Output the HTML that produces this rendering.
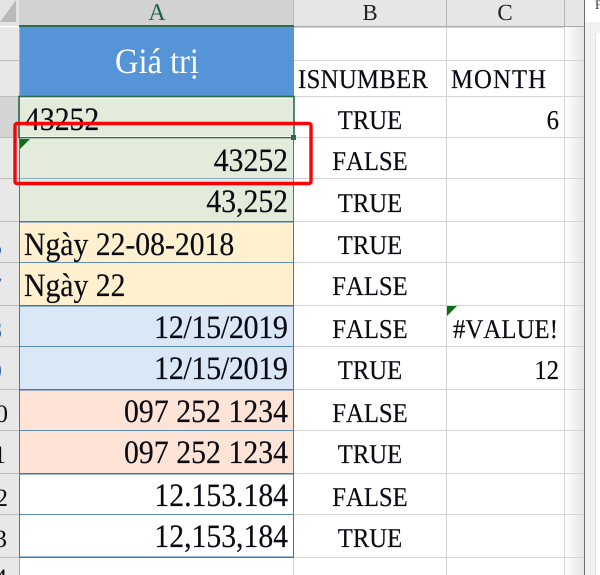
<!DOCTYPE html>
<html><head><meta charset="utf-8"><style>
html,body{margin:0;padding:0;background:#fff;width:600px;height:575px;overflow:hidden}
svg{display:block}
text{font-family:"Liberation Serif",serif;fill:#0b0b14;font-kerning:none;text-rendering:geometricPrecision}
.a{font-size:29.7px}
.a text,.b text{stroke:#0b0b14;stroke-width:.18px}
.b{font-size:24.7px}
</style></head><body>
<svg width="600" height="575" viewBox="0 0 600 575" xmlns="http://www.w3.org/2000/svg">
<defs><linearGradient id="g" x1="0" x2="1" y1="0" y2="0"><stop offset="0" stop-color="#fff"/><stop offset="1" stop-color="#e4e4e4"/></linearGradient></defs>
<rect width="600" height="575" fill="#fff"/>
<!-- column headers -->
<rect x="0" y="0" width="19" height="26" fill="#e4e4e4"/>
<polygon points="16,0 16,22 0,22" fill="#b9b9b9"/>
<rect x="19" y="0" width="275" height="26" fill="#d2d2d2"/>
<rect x="294" y="0" width="290" height="26" fill="#e6e6e6"/>
<rect x="293" y="0" width="1" height="26" fill="#bdbdbd"/>
<rect x="446" y="0" width="1" height="26" fill="#b5b5b5"/>
<rect x="564" y="0" width="1" height="26" fill="#b5b5b5"/>
<rect x="294" y="26" width="290" height="1.5" fill="#a8a8a8"/>
<rect x="19" y="25" width="275" height="2" fill="#2c7050"/>
<!-- row headers -->
<rect x="0" y="27" width="19" height="548" fill="#e8e8e8"/>
<rect x="0" y="97" width="19" height="40" fill="#d4d4d4"/>
<g fill="#bcbcbc">
<rect x="0" y="60" width="19" height="1"/><rect x="0" y="96" width="19" height="1"/><rect x="0" y="137" width="19" height="1"/><rect x="0" y="178" width="19" height="1"/><rect x="0" y="221" width="19" height="1"/><rect x="0" y="262" width="19" height="1"/><rect x="0" y="305" width="19" height="1"/><rect x="0" y="346" width="19" height="1"/><rect x="0" y="389" width="19" height="1"/><rect x="0" y="430" width="19" height="1"/><rect x="0" y="473" width="19" height="1"/><rect x="0" y="514" width="19" height="1"/><rect x="0" y="557" width="19" height="1"/>
<rect x="19" y="27" width="1" height="548" fill="#b0b0b0"/>
</g>
<!-- gridlines -->
<g fill="#d4d4d4">
<rect x="294" y="60" width="290" height="1"/><rect x="294" y="96" width="290" height="1"/><rect x="294" y="137" width="290" height="1"/><rect x="294" y="178" width="290" height="1"/><rect x="294" y="221" width="290" height="1"/><rect x="294" y="262" width="290" height="1"/><rect x="294" y="305" width="290" height="1"/><rect x="294" y="346" width="290" height="1"/><rect x="294" y="389" width="290" height="1"/><rect x="294" y="430" width="290" height="1"/><rect x="294" y="473" width="290" height="1"/><rect x="294" y="514" width="290" height="1"/><rect x="294" y="557" width="290" height="1"/>
<rect x="446" y="27" width="1" height="548"/><rect x="564" y="27" width="1" height="548"/><rect x="293" y="557" width="1" height="18"/>
</g>
<rect x="565" y="27" width="19" height="548" fill="url(#g)"/>
<g fill="#d4d4d4"><rect x="565" y="60" width="19" height="1"/><rect x="565" y="96" width="19" height="1"/><rect x="565" y="137" width="19" height="1"/><rect x="565" y="178" width="19" height="1"/><rect x="565" y="221" width="19" height="1"/><rect x="565" y="262" width="19" height="1"/><rect x="565" y="305" width="19" height="1"/><rect x="565" y="346" width="19" height="1"/><rect x="565" y="389" width="19" height="1"/><rect x="565" y="430" width="19" height="1"/><rect x="565" y="473" width="19" height="1"/><rect x="565" y="514" width="19" height="1"/><rect x="565" y="557" width="19" height="1"/></g>
<!-- right side window -->
<rect x="584" y="0" width="1.3" height="575" fill="#6e6e6e"/>
<rect x="585" y="0" width="15" height="575" fill="#fff"/>
<rect x="585" y="22" width="10" height="553" fill="#f1f1f1"/>
<rect x="595" y="33" width="5" height="542" fill="#fff"/>
<rect x="595" y="33" width="1" height="542" fill="#e0e0e0"/>
<rect x="595" y="22" width="5" height="11" fill="#f1f1f1"/>
<text x="595" y="9" font-size="13" style="fill:#333">F</text>
<!-- column A fills -->
<rect x="20" y="27" width="274" height="70" fill="#5694d8"/>
<rect x="20" y="97" width="274" height="124" fill="#e3ecdb"/>
<rect x="20" y="221" width="274" height="84" fill="#fff1d0"/>
<rect x="20" y="305" width="274" height="84" fill="#d9e7f6"/>
<rect x="20" y="389" width="274" height="84" fill="#fde4d6"/>
<rect x="20" y="473" width="274" height="84" fill="#fff"/>
<!-- column A borders -->
<g fill="#5b8db8">
<rect x="20" y="178" width="274" height="1"/>
<rect x="20" y="262" width="274" height="1"/>
<rect x="20" y="346" width="274" height="1"/>
<rect x="20" y="430" width="274" height="1"/>
<rect x="20" y="514" width="274" height="1"/>
</g>
<g fill="#3f78ad">
<rect x="20" y="221" width="274" height="1.5"/>
<rect x="20" y="305" width="274" height="1.5"/>
<rect x="20" y="389" width="274" height="1.5"/>
<rect x="20" y="473" width="274" height="1.5"/>
<rect x="20" y="556.5" width="274" height="1.5"/>
<rect x="293" y="137" width="1" height="421"/>
<rect x="19" y="137" width="1" height="421"/>
</g>
<rect x="20" y="178" width="274" height="1" fill="#8aaec9"/>
<!-- selected cell -->
<rect x="19" y="96.5" width="275" height="41" fill="none" stroke="#2c6b4c" stroke-width="1.6"/>
<rect x="20" y="98" width="273" height="1" fill="#f4f8ef"/>
<rect x="20" y="136" width="273" height="1" fill="#f4f8ef"/>
<rect x="291" y="135" width="5" height="5" fill="#2c6b4c"/>
<!-- green triangles -->
<polygon points="20,139 30,139 20,149" fill="#0f6f17"/>
<polygon points="447,306 457,306 447,316" fill="#0f6f17"/>
<!-- header labels -->
<text transform="translate(157,20)" font-size="24" text-anchor="middle" style="fill:#1f6144">A</text>
<text transform="translate(370,20)" font-size="23" text-anchor="middle" style="fill:#222">B</text>
<text transform="translate(505,20)" font-size="23" text-anchor="middle" style="fill:#222">C</text>
<!-- row numbers -->
<g font-size="25" text-anchor="end">
<text x="1" y="255" style="fill:#2a66a8" dx="1">5</text>
<text x="1" y="295" style="fill:#2a66a8" dx="1">7</text>
<text x="1" y="338" style="fill:#2a66a8" dx="1">8</text>
<text x="1" y="379" style="fill:#2a66a8" dx="1">9</text>
<text x="8" y="422">0</text>
<text x="6" y="463">1</text>
<text x="8" y="506">2</text>
<text x="7" y="547">3</text>
<text x="7" y="586">4</text>
</g>
<!-- title -->
<text transform="translate(157,73) scale(1,1.1)" font-size="32.5" text-anchor="middle" style="fill:#fff">Giá trị</text>
<!-- col A -->
<g class="a">
<text transform="translate(25,130) scale(1,1.1)">43252</text>
<text transform="translate(288,171) scale(1,1.1)" text-anchor="end">43252</text>
<text transform="translate(288,212) scale(1,1.1)" text-anchor="end">43,252</text>
<text transform="translate(24,255) scale(1,1.1)">Ngày 22-08-2018</text>
<text transform="translate(24,296) scale(1,1.1)">Ngày 22</text>
<text transform="translate(288,338) scale(1.015,1.1)" text-anchor="end" textLength="132" lengthAdjust="spacing">12/15/2019</text>
<text transform="translate(288,379) scale(1.015,1.1)" text-anchor="end" textLength="132" lengthAdjust="spacing">12/15/2019</text>
<text transform="translate(288,422) scale(1,1.1)" text-anchor="end" textLength="164" lengthAdjust="spacing">097 252 1234</text>
<text transform="translate(288,463) scale(1,1.1)" text-anchor="end" textLength="164" lengthAdjust="spacing">097 252 1234</text>
<text transform="translate(288,506) scale(1,1.1)" text-anchor="end">12.153.184</text>
<text transform="translate(288,547) scale(1,1.1)" text-anchor="end">12,153,184</text>
</g>
<!-- col B -->
<g class="b" text-anchor="middle">
<text transform="translate(363,88) scale(1,1.1)" textLength="130" lengthAdjust="spacing">ISNUMBER</text>
<text transform="translate(370,129) scale(1,1.1)">TRUE</text>
<text transform="translate(370,170) scale(1,1.1)">FALSE</text>
<text transform="translate(370,212) scale(1,1.1)">TRUE</text>
<text transform="translate(370,254) scale(1,1.1)">TRUE</text>
<text transform="translate(370,295) scale(1,1.1)">FALSE</text>
<text transform="translate(370,338) scale(1,1.1)">FALSE</text>
<text transform="translate(370,379) scale(1,1.1)">TRUE</text>
<text transform="translate(370,422) scale(1,1.1)">FALSE</text>
<text transform="translate(370,463) scale(1,1.1)">TRUE</text>
<text transform="translate(370,506) scale(1,1.1)">FALSE</text>
<text transform="translate(370,547) scale(1,1.1)">TRUE</text>
</g>
<!-- col C -->
<g class="b">
<text transform="translate(451,88) scale(1,1.1)" textLength="95" lengthAdjust="spacing">MONTH</text>
<text transform="translate(559,129) scale(1,1.1)" text-anchor="end">6</text>
<text transform="translate(453,338) scale(1,1.1)" textLength="105" lengthAdjust="spacing">#VALUE!</text>
<text transform="translate(559,379) scale(1,1.1)" text-anchor="end">12</text>
</g>
<!-- red box -->
<rect x="15" y="123.5" width="296" height="60" rx="2" fill="none" stroke="#fb0007" stroke-width="3.4"/>
</svg>
</body></html>
